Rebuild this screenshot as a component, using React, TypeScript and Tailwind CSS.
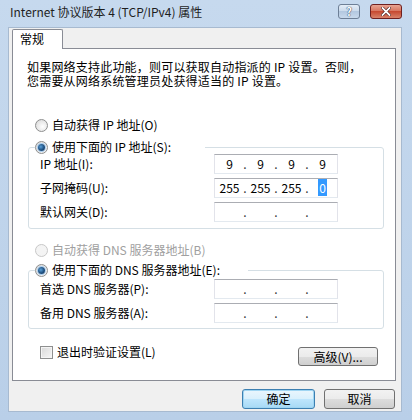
import React from 'react';

const btnFace =
  'bg-[linear-gradient(#f2f2f2_0%,#ebebeb_50%,#dddddd_50%,#cfcfcf_100%)] border border-[#707070] rounded-[3px]';

function Radio({ checked = false, disabled = false }: { checked?: boolean; disabled?: boolean }) {
  return (
    <span
      className={`w-[13px] h-[13px] rounded-full border flex items-center justify-center shrink-0 ${
        disabled
          ? 'border-[#c8c8c8] bg-[#f4f4f4]'
          : 'border-[#8e8f8f] bg-[radial-gradient(circle_at_60%_60%,#ffffff_0%,#e6e6e6_60%,#cfcfcf_100%)]'
      }`}
    >
      {checked && (
        <span className="w-[7px] h-[7px] rounded-full bg-[radial-gradient(circle_at_40%_40%,#5aa0d8_0%,#1d4f80_55%,#1a3c62_100%)] shadow-[0_0_0_1px_#a9cdee]" />
      )}
    </span>
  );
}

function IpBox({ values }: { values: string[] }) {
  return (
    <div className="w-[124px] h-[20px] bg-white border border-[#e2e3ea] border-t-[#abadb3] border-b-[#e3e9ef] flex items-center px-[2px] text-[12px]">
      {[0, 1, 2, 3].map((i) => (
        <React.Fragment key={i}>
          <span className="w-[25px] text-center leading-[14px]">
            {values[i] === 'SEL' ? (
              <span className="bg-[#3399ff] text-white px-[1px]">0</span>
            ) : (
              values[i] ?? ''
            )}
          </span>
          {i < 3 && <span className="w-[6px] text-center leading-[14px] text-[#333]">.</span>}
        </React.Fragment>
      ))}
    </div>
  );
}

function Row({ label, values }: { label: string; values: string[] }) {
  return (
    <div className="flex items-center h-[20px]">
      <span className="w-[174px] leading-[14px]">{label}</span>
      <IpBox values={values} />
    </div>
  );
}

export default function App() {
  return (
    <div className="w-[412px] h-[420px] bg-[linear-gradient(#c6d9ee,#b9cfe8)] flex flex-col text-[12px] leading-[14px] text-black font-['Noto_Sans_CJK_SC',sans-serif]">
      {/* title bar */}
      <div className="h-[27px] flex items-start justify-between pl-[10px] pr-[10px] shrink-0">
        <span className="pt-[5px] text-[#1e1e1e]">Internet 协议版本 4 (TCP/IPv4) 属性</span>
        <div className="flex gap-[10px] pt-[4px]">
          <div className="w-[22px] h-[15px] rounded-[3px] border border-[#6d7f96] bg-[linear-gradient(#e4edf7_0%,#c9d9eb_50%,#b3c8e0_50%,#c8d9ec_100%)] flex items-center justify-center text-[11px] font-bold leading-none text-white [text-shadow:0_0_1px_#203450,0_0_1px_#203450]">
            ?
          </div>
          <div className="w-[32px] h-[15px] rounded-[3px] border border-[#6f2020] bg-[linear-gradient(#e8a492_0%,#d7725c_50%,#c74a32_50%,#d8826a_100%)] flex items-center justify-center">
            <svg width="10" height="9" viewBox="0 0 10 9">
              <path d="M1.5 1 L8.5 8 M8.5 1 L1.5 8" stroke="#3b1010" strokeWidth="3" strokeLinecap="square" />
              <path d="M1.5 1 L8.5 8 M8.5 1 L1.5 8" stroke="#ffffff" strokeWidth="1.8" strokeLinecap="square" />
            </svg>
          </div>
        </div>
      </div>

      {/* client area */}
      <div className="ml-[8px] mr-[10px] h-[385px] bg-[#f0f0f0] border border-[#a7bad0] flex flex-col pl-[3px] pr-[5px] pt-[1px]">
        <div className="flex">
          <div className="w-[51px] h-[20px] bg-white border border-b-0 border-[#898c95] rounded-t-[2px] -mb-px relative z-10 pl-[7px] pt-[2px] leading-[14px]">
            常规
          </div>
        </div>
        <div className="h-[333px] bg-white border border-[#898c95] flex flex-col pl-[14px] pt-[11px]">
          <p className="leading-[14px] tracking-[0.2px]">
            如果网络支持此功能，则可以获取自动指派的 IP 设置。否则，
            <br />
            您需要从网络系统管理员处获得适当的 IP 设置。
          </p>

          <div className="mt-[30px] ml-[8px] h-[14px] flex items-center gap-[4px]">
            <Radio />
            <span>自动获得 IP 地址(O)</span>
          </div>

          <fieldset className="mt-[8px] ml-[1px] w-[356px] border border-[#d5dfe5] rounded-[3px] pl-[11px] pb-[6px]">
            <legend className="ml-[-5px] w-[170px] h-[14px] flex items-center gap-[4px] bg-white">
              <Radio checked />
              <span>使用下面的 IP 地址(S):</span>
            </legend>
            <div className="flex flex-col gap-[4px]">
              <Row label="IP 地址(I):" values={['9', '9', '9', '9']} />
              <Row label="子网掩码(U):" values={['255', '255', '255', 'SEL']} />
              <Row label="默认网关(D):" values={[]} />
            </div>
          </fieldset>

          <div className="mt-[14px] ml-[8px] h-[14px] flex items-center gap-[4px] text-[#a0a0a0]">
            <Radio disabled />
            <span>自动获得 DNS 服务器地址(B)</span>
          </div>

          <fieldset className="mt-[6px] ml-[1px] w-[356px] border border-[#d5dfe5] rounded-[3px] pl-[11px] pb-[5px]">
            <legend className="ml-[-5px] w-[213px] h-[14px] flex items-center gap-[4px] bg-white">
              <Radio checked />
              <span>使用下面的 DNS 服务器地址(E):</span>
            </legend>
            <div className="mt-[2px] flex flex-col gap-[4px]">
              <Row label="首选 DNS 服务器(P):" values={[]} />
              <Row label="备用 DNS 服务器(A):" values={[]} />
            </div>
          </fieldset>

          <div className="mt-[16px] flex items-start justify-between pl-[13px] pr-[17px]">
            <div className="flex items-center gap-[4px] h-[14px]">
              <span className="w-[13px] h-[13px] border border-[#8e8f8f] bg-[linear-gradient(135deg,#d8d8d8,#f6f6f6)] shadow-[inset_0_0_0_1px_#f4f4f4]" />
              <span>退出时验证设置(L)</span>
            </div>
            <button className={`${btnFace} mt-[2px] w-[80px] h-[19px] text-[12px] leading-[14px]`}>高级(V)...</button>
          </div>
        </div>

        <div className="mt-[8px] flex justify-end gap-[9px] pr-[1px]">
          <button className="w-[73px] h-[20px] rounded-[3px] border border-[#3c7fb1] bg-[linear-gradient(#eaf6fd_0%,#d9f0fc_50%,#bee6fd_50%,#a7d9f5_100%)] shadow-[inset_0_0_0_1px_#9fd5f2] text-[12px] leading-[14px]">
            确定
          </button>
          <button className={`${btnFace} w-[71px] h-[20px] text-[12px] leading-[14px]`}>取消</button>
        </div>
      </div>
    </div>
  );
}
